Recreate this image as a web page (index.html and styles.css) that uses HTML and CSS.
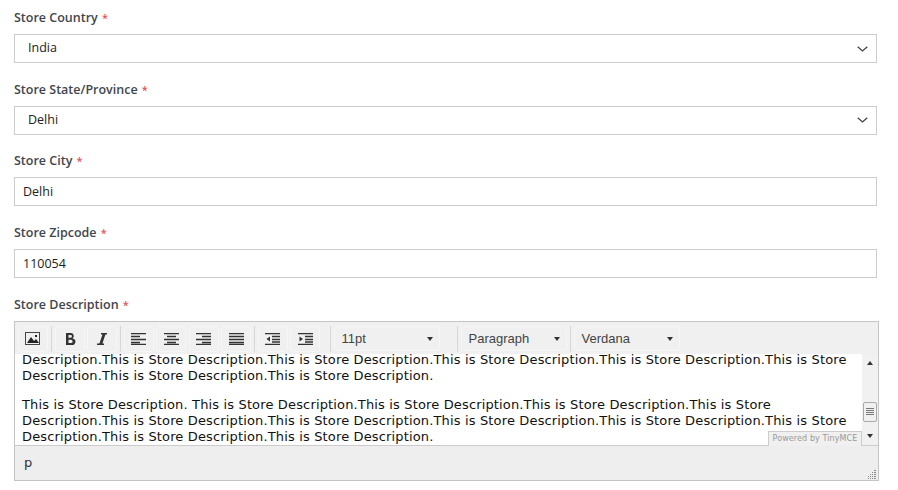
FILE: index.html
```html
<!DOCTYPE html>
<html lang="en">
<head>
<meta charset="utf-8">
<title>Store form</title>
<link rel="stylesheet" href="styles.css">
</head>
<body>
<form class="form">
  <div class="field">
    <div class="label">Store Country <span class="req">*</span></div>
    <div class="input select"><span>India</span>
      <svg class="chev" width="11" height="6" viewBox="0 0 11 6"><path d="M.7.7 5.500 5 10.300.7" fill="none" stroke="#444" stroke-width="1.300"/></svg></div>
  </div>
  <div class="field">
    <div class="label">Store State/Province <span class="req">*</span></div>
    <div class="input select"><span>Delhi</span>
      <svg class="chev" width="11" height="6" viewBox="0 0 11 6"><path d="M.7.7 5.500 5 10.300.7" fill="none" stroke="#444" stroke-width="1.300"/></svg></div>
  </div>
  <div class="field">
    <div class="label">Store City <span class="req">*</span></div>
    <div class="input"><span>Delhi</span></div>
  </div>
  <div class="field">
    <div class="label">Store Zipcode <span class="req">*</span></div>
    <div class="input"><span>110054</span></div>
  </div>
  <div class="field">
    <div class="label">Store Description <span class="req">*</span></div>
    <div class="editor">
      <div class="toolbar">
        <span class="btn"><svg width="16" height="14" viewBox="0 0 16 14"><rect x=".5" y=".5" width="14" height="12" fill="#eee" stroke="#444"/><path d="M2 11 6 5l3 4 2-2 3 4z" fill="#222"/><rect x="10" y="3" width="2" height="2" fill="#222"/></svg></span>
        <i class="sep"></i>
        <span class="btn"><svg width="14" height="14" viewBox="0 0 14 14"><path d="M3 1h5a3 3 0 0 1 1.600 5.400A3.300 3.300 0 0 1 8.500 13H3zM5.500 3v2.700H7.600a1.300 1.300 0 0 0 0-2.700zM5.500 7.800V11h2.500a1.600 1.600 0 0 0 0-3.200z" fill="#333" fill-rule="evenodd"/></svg></span>
        <span class="btn"><svg width="14" height="14" viewBox="0 0 14 14"><path d="M6 1h6v1.500h-1.600L7.400 11.500H9V13H2v-1.500h2.400L7.500 2.500H6z" fill="#333"/></svg></span>
        <i class="sep"></i>
        <span class="btn"><svg width="15" height="12" viewBox="0 0 15 12"><path d="M0 .5h15M0 3.500h9M0 6.500h15M0 9.500h9M0 11.500h15" stroke="#333" stroke-width="1.400"/></svg></span>
        <span class="btn"><svg width="15" height="12" viewBox="0 0 15 12"><path d="M0 .5h15M3 3.500h9M0 6.500h15M3 9.500h9M0 11.500h15" stroke="#333" stroke-width="1.400"/></svg></span>
        <span class="btn"><svg width="15" height="12" viewBox="0 0 15 12"><path d="M0 .5h15M6 3.500h9M0 6.500h15M6 9.500h9M0 11.500h15" stroke="#333" stroke-width="1.400"/></svg></span>
        <span class="btn"><svg width="15" height="12" viewBox="0 0 15 12"><path d="M0 .5h15M0 3.500h15M0 6.500h15M0 9.500h15M0 11.500h15" stroke="#333" stroke-width="1.400"/></svg></span>
        <i class="sep"></i>
        <span class="btn"><svg width="15" height="12" viewBox="0 0 15 12"><path d="M0 .5h15M7 3.500h8M7 6.500h8M7 9h8M0 11.500h15" stroke="#333" stroke-width="1.400"/><path d="M5 3.500V8.500L1.500 6z" fill="#333"/></svg></span>
        <span class="btn"><svg width="15" height="12" viewBox="0 0 15 12"><path d="M0 .5h15M7 3.500h8M7 6.500h8M7 9h8M0 11.500h15" stroke="#333" stroke-width="1.400"/><path d="M1.500 3.500V8.500L5 6z" fill="#333"/></svg></span>
        <i class="sep last"></i>
        <span class="combo first"><span>11pt</span><b class="caret"></b></span>
        <i class="sep"></i>
        <span class="combo"><span>Paragraph</span><b class="caret"></b></span>
        <i class="sep"></i>
        <span class="combo"><span>Verdana</span><b class="caret"></b></span>
      </div>
      <div class="body">
        <div class="content">
          <div class="scrolled">
            <p>Description.This is Store Description.This is Store Description.This is Store Description.This is Store Description.This is Store<br>Description.This is Store Description.This is Store Description.</p>
            <p>This is Store Description. This is Store Description.This is Store Description.This is Store Description.This is Store<br>Description.This is Store Description.This is Store Description.This is Store Description.This is Store Description.This is Store<br>Description.This is Store Description.This is Store Description.</p>
          </div>
        </div>
        <div class="scrollbar">
          <span class="arrow up"></span>
          <span class="track"><span class="thumb"><i></i><i></i><i></i><i></i></span></span>
          <span class="arrow down"></span>
        </div>
        <div class="powered">Powered by TinyMCE</div>
      </div>
      <div class="status">
        <span>p</span>
        <svg class="grip" width="9" height="9" viewBox="0 0 9 9"><path d="M7 0h2v1H7zM7 2h2v1H7zM5 2h1v1H5zM7 4h2v1H7zM5 4h1v1H5zM3 4h1v1H3zM7 6h2v1H7zM5 6h1v1H5zM3 6h1v1H3zM1 6h1v1H1zM7 8h2v1H7zM5 8h1v1H5zM3 8h1v1H3zM1 8h1v1H1z" fill="#888"/></svg>
      </div>
    </div>
  </div>
</form>
</body>
</html>
```

FILE: styles.css
```css
* { box-sizing: border-box; }
html, body { margin: 0; height: 490px; overflow: hidden; background: #fff; }
.form {
  display: flex;
  flex-direction: column;
  gap: 17.700px;
  padding: 9px 21px 0 14px;
  font-family: "Open Sans", sans-serif;
}
.field { display: flex; flex-direction: column; gap: 8px; }
.label { font-size: 12.500px; font-weight: 600; line-height: 17px; color: #41464d; }
.req { color: #e8505b; font-size: 11px; margin-left: 1px; }
.input {
  height: 29px;
  border: 1px solid #ccc;
  padding: 0 8px;
  display: flex;
  align-items: center;
  justify-content: space-between;
  font-size: 12.500px;
  color: #222;
}
.select { padding: 0 13px 2px; }
.chev { margin: 2px -5px 0 0; }
.editor {
  width: 865px;
  height: 160px;
  border: 1px solid #c4c4c4;
  display: flex;
  flex-direction: column;
}
.toolbar {
  height: 33px;
  background: #f0f0f0;
  display: flex;
  align-items: center;
  padding: 2px 0 0 3px;
}
.btn {
  width: 30px;
  height: 26px;
  margin-right: 2.500px;
  border: 1px solid #f6f6f6;
  border-radius: 3px;
  display: flex;
  align-items: center;
  justify-content: center;
}
.sep { width: 1px; height: 26px; background: #d8d8d8; margin: 0 3px 0 0; }
.sep.last { margin-left: 7px; }
.combo {
  width: 106px;
  height: 25px;
  margin-right: 3px;
  border: 1px solid #f6f6f6;
  border-radius: 3px;
  display: flex;
  align-items: center;
  justify-content: space-between;
  padding: 0 6px 0 7px;
  font: 13px "Liberation Sans", Arial, sans-serif;
  color: #444;
}
.combo.first { margin-right: 17px; }
.caret { width: 0; height: 0; border: 3.500px solid transparent; border-top: 4px solid #333; border-bottom: 0; }
.body { position: relative; height: 92px; display: flex; border-bottom: 1px solid #ccc; }
.content { flex: 1; overflow: hidden; padding: 0 7px; font: 13px/16px "DejaVu Sans", Verdana, sans-serif; letter-spacing: .15px; color: #111; }
.scrolled { margin-top: -2px; white-space: nowrap; }
.scrolled p { margin: 0 0 13px; }
.scrollbar { width: 16px; background: #f1f1f1; display: flex; flex-direction: column; align-items: center; }
.arrow { height: 17px; width: 100%; display: flex; align-items: center; justify-content: center; }
.arrow::before { content: ""; border: 3.500px solid transparent; }
.arrow.up::before { border-bottom: 4px solid #333; border-top: 0; margin-top: 2px; }
.arrow.down::before { border-top: 4px solid #333; border-bottom: 0; }
.track { flex: 1; width: 100%; padding-top: 31px; }
.thumb {
  display: flex;
  flex-direction: column;
  justify-content: center;
  align-items: center;
  gap: 1px;
  width: 14px;
  height: 20px;
  margin-left: 1px;
  background: #f0f0f0;
  border: 1px solid #aaa;
  border-radius: 2px;
}
.thumb i { width: 8px; height: 1px; background: #777; }
.powered {
  position: absolute;
  right: 16px;
  bottom: -1px;
  width: 94px;
  height: 15px;
  border: 1px solid #ccc;
  border-bottom: 0;
  background: #f0f0f0;
  font: 8px/13px "DejaVu Sans", sans-serif;
  letter-spacing: .1px;
  color: #999;
  text-align: center;
  white-space: nowrap;
}
.status { flex: 1; background: #eee; position: relative; padding: 9px 9px; font: 13px/16px "DejaVu Sans", Verdana, sans-serif; color: #333; }
.grip { position: absolute; right: 2px; bottom: 1px; }
```
